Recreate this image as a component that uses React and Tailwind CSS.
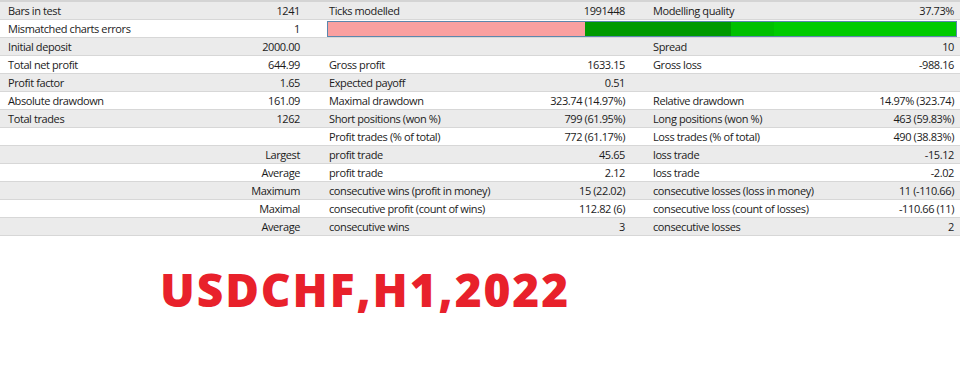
import React from 'react';

const rows = [
  ['Bars in test', '1241', 'Ticks modelled', '1991448', 'Modelling quality', '37.73%'],
  ['Mismatched charts errors', '1', 'BAR'],
  ['Initial deposit', '2000.00', '', '', 'Spread', '10'],
  ['Total net profit', '644.99', 'Gross profit', '1633.15', 'Gross loss', '-988.16'],
  ['Profit factor', '1.65', 'Expected payoff', '0.51', '', ''],
  ['Absolute drawdown', '161.09', 'Maximal drawdown', '323.74 (14.97%)', 'Relative drawdown', '14.97% (323.74)'],
  ['Total trades', '1262', 'Short positions (won %)', '799 (61.95%)', 'Long positions (won %)', '463 (59.83%)'],
  ['', '', 'Profit trades (% of total)', '772 (61.17%)', 'Loss trades (% of total)', '490 (38.83%)'],
  ['', 'Largest', 'profit trade', '45.65', 'loss trade', '-15.12'],
  ['', 'Average', 'profit trade', '2.12', 'loss trade', '-2.02'],
  ['', 'Maximum', 'consecutive wins (profit in money)', '15 (22.02)', 'consecutive losses (loss in money)', '11 (-110.66)'],
  ['', 'Maximal', 'consecutive profit (count of wins)', '112.82 (6)', 'consecutive loss (count of losses)', '-110.66 (11)'],
  ['', 'Average', 'consecutive wins', '3', 'consecutive losses', '2'],
];

function QualityBar() {
  return (
    <div className="ml-[2px] flex h-[16px] w-[630px] border border-[#5b87ad]">
      <div className="w-[257px] bg-[#f9a0a0]" />
      <div className="w-[146px] bg-[#009a00]" />
      <div className="w-[43px] bg-[#00c000]" />
      <div className="flex-1 bg-[#00cb00]" />
    </div>
  );
}

function Row({ r, i }) {
  const bg = i % 2 === 0 ? 'bg-[#ebebeb]' : 'bg-white';
  return (
    <div className={`flex h-[18px] items-center border-b border-[#d7d7d7] ${bg}`}>
      <div className="flex w-[306px] items-center justify-between pl-2 pr-[6px]">
        <span>{r[0]}</span>
        <span>{r[1]}</span>
      </div>
      {r[2] === 'BAR' ? (
        <div className="ml-[19px] flex items-center">
          <QualityBar />
        </div>
      ) : (
        <>
          <div className="ml-[19px] flex w-[306px] items-center justify-between pl-[4px] pr-[6px]">
            <span>{r[2]}</span>
            <span>{r[3]}</span>
          </div>
          <div className="ml-[18px] flex flex-1 items-center justify-between pl-[4px] pr-[6px]">
            <span>{r[4]}</span>
            <span>{r[5]}</span>
          </div>
        </>
      )}
    </div>
  );
}

export default function App() {
  return (
    <div className="h-[368px] w-[960px] overflow-hidden bg-white">
      <div
        className="border-t-2 border-[#d4d4d4] text-[11px] leading-none tracking-[-0.4px] text-[#1b1b1b]"
        style={{ fontFamily: '"Open Sans", "Noto Sans", sans-serif' }}
      >
        {rows.map((r, i) => (
          <Row key={i} r={r} i={i} />
        ))}
      </div>
      <div className="mt-[30px] pl-[160px]">
        <span
          className="text-[46px] font-extrabold leading-none tracking-[1.9px] text-[#e8212b]"
          style={{ fontFamily: '"Open Sans", "Noto Sans", sans-serif' }}
        >
          USDCHF,H1,2022
        </span>
      </div>
    </div>
  );
}
